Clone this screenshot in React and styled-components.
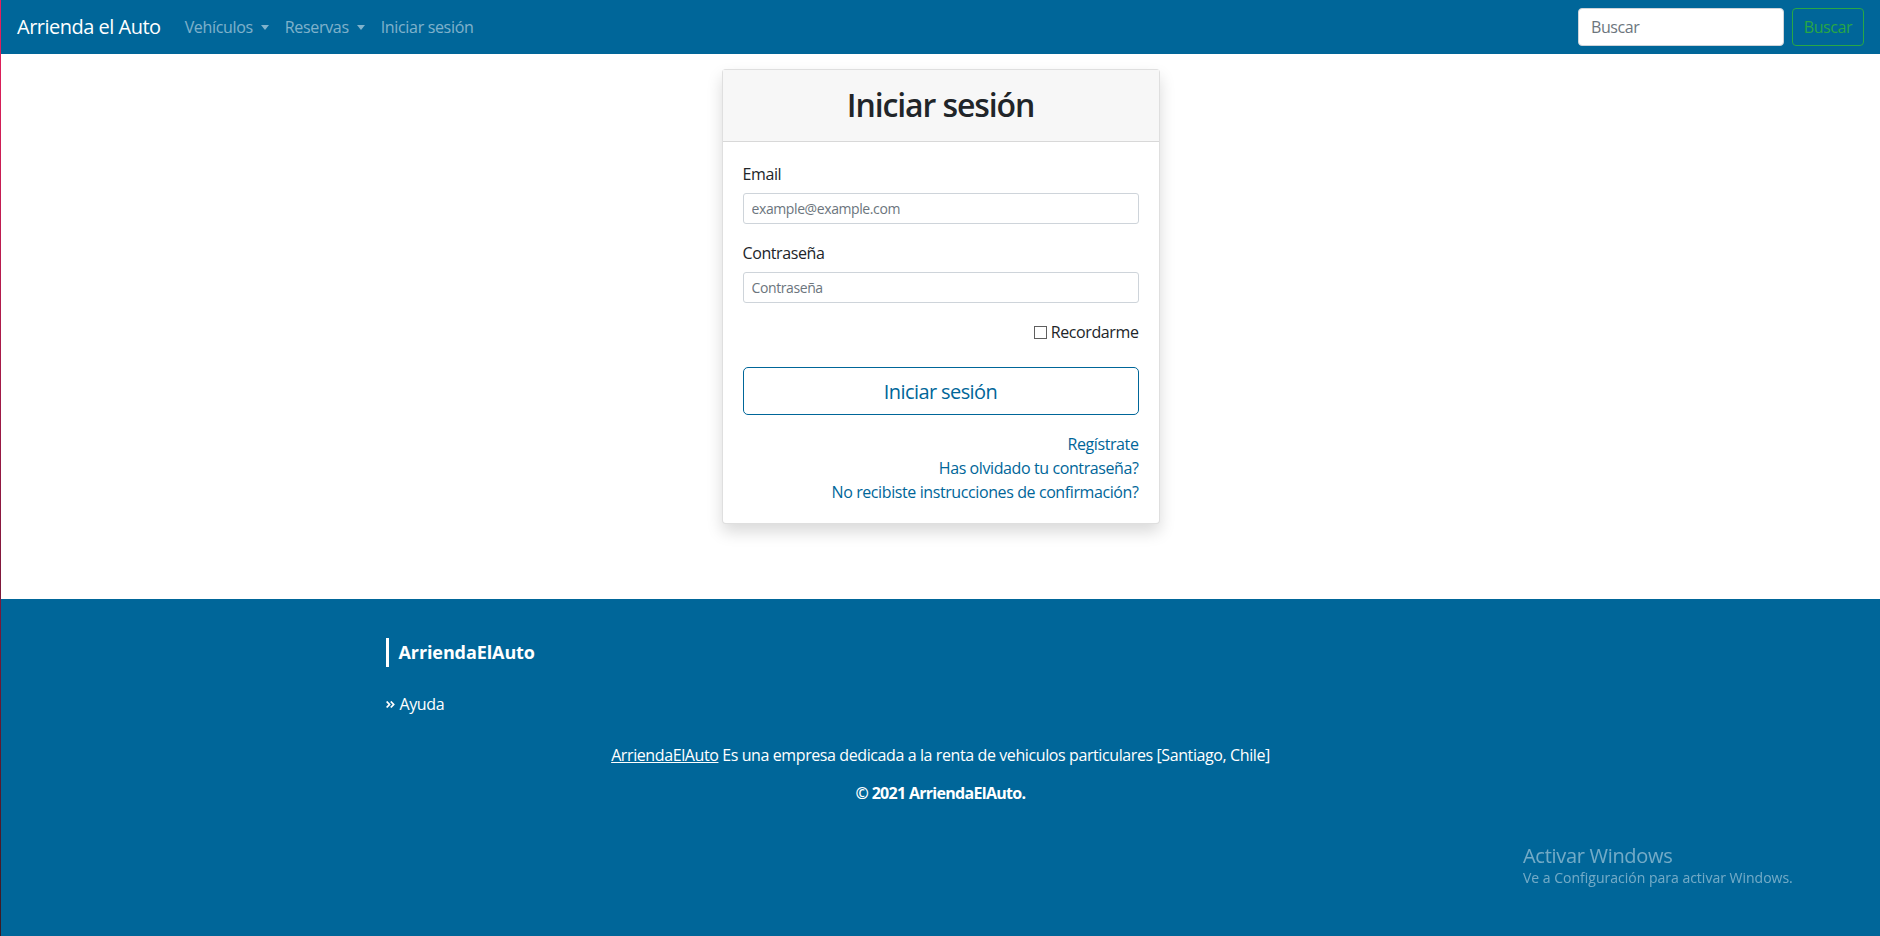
import styled, { createGlobalStyle } from "styled-components";
import { FaAngleDoubleRight } from "react-icons/fa";

const BLUE = "#006699";

const GlobalStyle = createGlobalStyle`
  * { box-sizing: border-box; }
  html, body {
    margin: 0;
    padding: 0;
  }
  body {
    font-family: "Open Sans", "Noto Sans", sans-serif;
    font-size: 16px;
    line-height: 1.5;
    color: #212529;
    background: #fff;
  }
`;

const Page = styled.div`
  min-height: 100vh;
  display: flex;
  flex-direction: column;
  border-left: 1px solid #e91e63;
  border-image: linear-gradient(#e8205e, #8c1840 55%, #3a1b24) 1;
`;

const Nav = styled.nav`
  height: 54px;
  background: ${BLUE};
  display: flex;
  align-items: center;
  padding: 8px 16px;
`;

const Brand = styled.a`
  color: #fff;
  font-size: 20px;
  letter-spacing: -0.5px;
  margin-right: 16px;
  text-decoration: none;
`;

const NavLinks = styled.div`
  display: flex;
  flex: 1;
`;

const NavLink = styled.a`
  color: rgba(255, 255, 255, 0.5);
  padding: 8px;
  letter-spacing: -0.33px;
  text-decoration: none;
  ${(p) =>
    p.$dropdown &&
    `
    &::after {
      content: "";
      display: inline-block;
      margin-left: 8px;
      vertical-align: 3px;
      border-top: 5px solid;
      border-left: 4.5px solid transparent;
      border-right: 4.5px solid transparent;
    }
  `}
`;

const Search = styled.form`
  display: flex;
  align-items: center;
`;

const SearchInput = styled.input`
  width: 206px;
  height: 38px;
  padding: 6px 12px;
  border: 1px solid #ced4da;
  border-radius: 4px;
  font: inherit;
  letter-spacing: -0.4px;
  margin-right: 8px;
  &::placeholder { color: #6c757d; }
`;

const SearchButton = styled.button`
  height: 38px;
  width: 72px;
  background: transparent;
  border: 1px solid #28a745;
  border-radius: 4px;
  color: #28a745;
  font: inherit;
  letter-spacing: -0.4px;
`;

const Main = styled.main`
  display: flex;
  justify-content: center;
  padding: 15px 0 75px;
`;

const Card = styled.div`
  width: 438px;
  border: 1px solid rgba(0, 0, 0, 0.125);
  border-radius: 4px;
  box-shadow: 0 8px 16px rgba(0, 0, 0, 0.15);
  background: #fff;
`;

const CardHeader = styled.div`
  height: 72px;
  background: #f7f7f7;
  border-bottom: 1px solid rgba(0, 0, 0, 0.125);
  display: flex;
  align-items: center;
  justify-content: center;
`;

const Title = styled.h2`
  margin: 0;
  font-size: 32px;
  font-weight: 600;
  letter-spacing: -1.1px;
  line-height: 1.2;
`;

const CardBody = styled.div`
  padding: 20px 20px 19px;
`;

const Field = styled.div`
  margin-bottom: 17px;
`;

const Label = styled.label`
  display: block;
  margin-bottom: 7px;
  letter-spacing: -0.4px;
`;

const Input = styled.input`
  display: block;
  width: 100%;
  height: 31px;
  padding: 4px 8px;
  font-family: inherit;
  font-size: 14px;
  letter-spacing: -0.4px;
  border: 1px solid #ced4da;
  border-radius: 3px;
  &::placeholder { color: #6c757d; }
`;

const RememberRow = styled.div`
  display: flex;
  justify-content: flex-end;
  align-items: center;
  margin-bottom: 23px;
  letter-spacing: -0.4px;
`;

const Check = styled.input`
  appearance: none;
  width: 13px;
  height: 13px;
  border: 1px solid #5f5f5f;
  margin: 0 4px 0 0;
  background: #fff;
`;

const SubmitButton = styled.button`
  display: block;
  width: 100%;
  height: 48px;
  background: transparent;
  border: 1px solid ${BLUE};
  border-radius: 5px;
  color: ${BLUE};
  font-family: inherit;
  font-size: 20px;
  letter-spacing: -0.6px;
  margin-bottom: 17px;
`;

const Links = styled.div`
  display: flex;
  flex-direction: column;
  align-items: flex-end;
`;

const TextLink = styled.a`
  color: ${BLUE};
  text-decoration: none;
  letter-spacing: -0.4px;
  line-height: 24px;
`;

const Footer = styled.footer`
  flex: 1;
  background: ${BLUE};
  color: #fff;
  padding-top: 39px;
`;

const Container = styled.div`
  width: 1140px;
  margin: 0 auto;
  padding: 0 15px;
`;

const FooterBrand = styled.h5`
  margin: 0 0 25px;
  border-left: 3px solid #fff;
  padding-left: 10px;
  font-size: 18px;
  font-weight: 700;
  letter-spacing: -0.1px;
  line-height: 29px;
`;

const FooterItem = styled.div`
  display: flex;
  align-items: center;
  gap: 4px;
  letter-spacing: -0.4px;
  margin-bottom: 27px;
  svg { font-size: 11px; margin-left: -1px; }
`;

const About = styled.p`
  text-align: center;
  margin: 0 0 14px;
  letter-spacing: -0.4px;
  a { color: #fff; }
`;

const Copy = styled.p`
  text-align: center;
  font-weight: 700;
  margin: 0;
  letter-spacing: -0.7px;
`;

const Watermark = styled.div`
  position: fixed;
  left: 1523px;
  top: 844px;
  color: rgba(255, 255, 255, 0.45);
  pointer-events: none;
  line-height: 1.2;
  letter-spacing: -0.3px;
  .big { font-size: 20px; }
  .small { font-size: 14px; margin-top: 2px; letter-spacing: 0; }
`;

const App = () => {
  return (
    <Page>
      <GlobalStyle />
      <Nav>
        <Brand href="#">Arrienda el Auto</Brand>
        <NavLinks>
          <NavLink href="#" $dropdown>Vehículos</NavLink>
          <NavLink href="#" $dropdown>Reservas</NavLink>
          <NavLink href="#">Iniciar sesión</NavLink>
        </NavLinks>
        <Search onSubmit={(e) => e.preventDefault()}>
          <SearchInput placeholder="Buscar" />
          <SearchButton type="submit">Buscar</SearchButton>
        </Search>
      </Nav>

      <Main>
        <Card>
          <CardHeader>
            <Title>Iniciar sesión</Title>
          </CardHeader>
          <CardBody>
            <Field>
              <Label>Email</Label>
              <Input type="email" placeholder="example@example.com" />
            </Field>
            <Field>
              <Label>Contraseña</Label>
              <Input type="password" placeholder="Contraseña" />
            </Field>
            <RememberRow>
              <Check type="checkbox" id="remember" />
              <label htmlFor="remember">Recordarme</label>
            </RememberRow>
            <SubmitButton type="button">Iniciar sesión</SubmitButton>
            <Links>
              <TextLink href="#">Regístrate</TextLink>
              <TextLink href="#">Has olvidado tu contraseña?</TextLink>
              <TextLink href="#">No recibiste instrucciones de confirmación?</TextLink>
            </Links>
          </CardBody>
        </Card>
      </Main>

      <Footer>
        <Container>
          <FooterBrand>ArriendaElAuto</FooterBrand>
          <FooterItem>
            <FaAngleDoubleRight />
            <span>Ayuda</span>
          </FooterItem>
          <About>
            <a href="#">ArriendaElAuto</a> Es una empresa dedicada a la renta de vehiculos particulares [Santiago, Chile]
          </About>
          <Copy>© 2021 ArriendaElAuto.</Copy>
        </Container>
      </Footer>

      <Watermark>
        <div className="big">Activar Windows</div>
        <div className="small">Ve a Configuración para activar Windows.</div>
      </Watermark>
    </Page>
  );
};

export default App;
